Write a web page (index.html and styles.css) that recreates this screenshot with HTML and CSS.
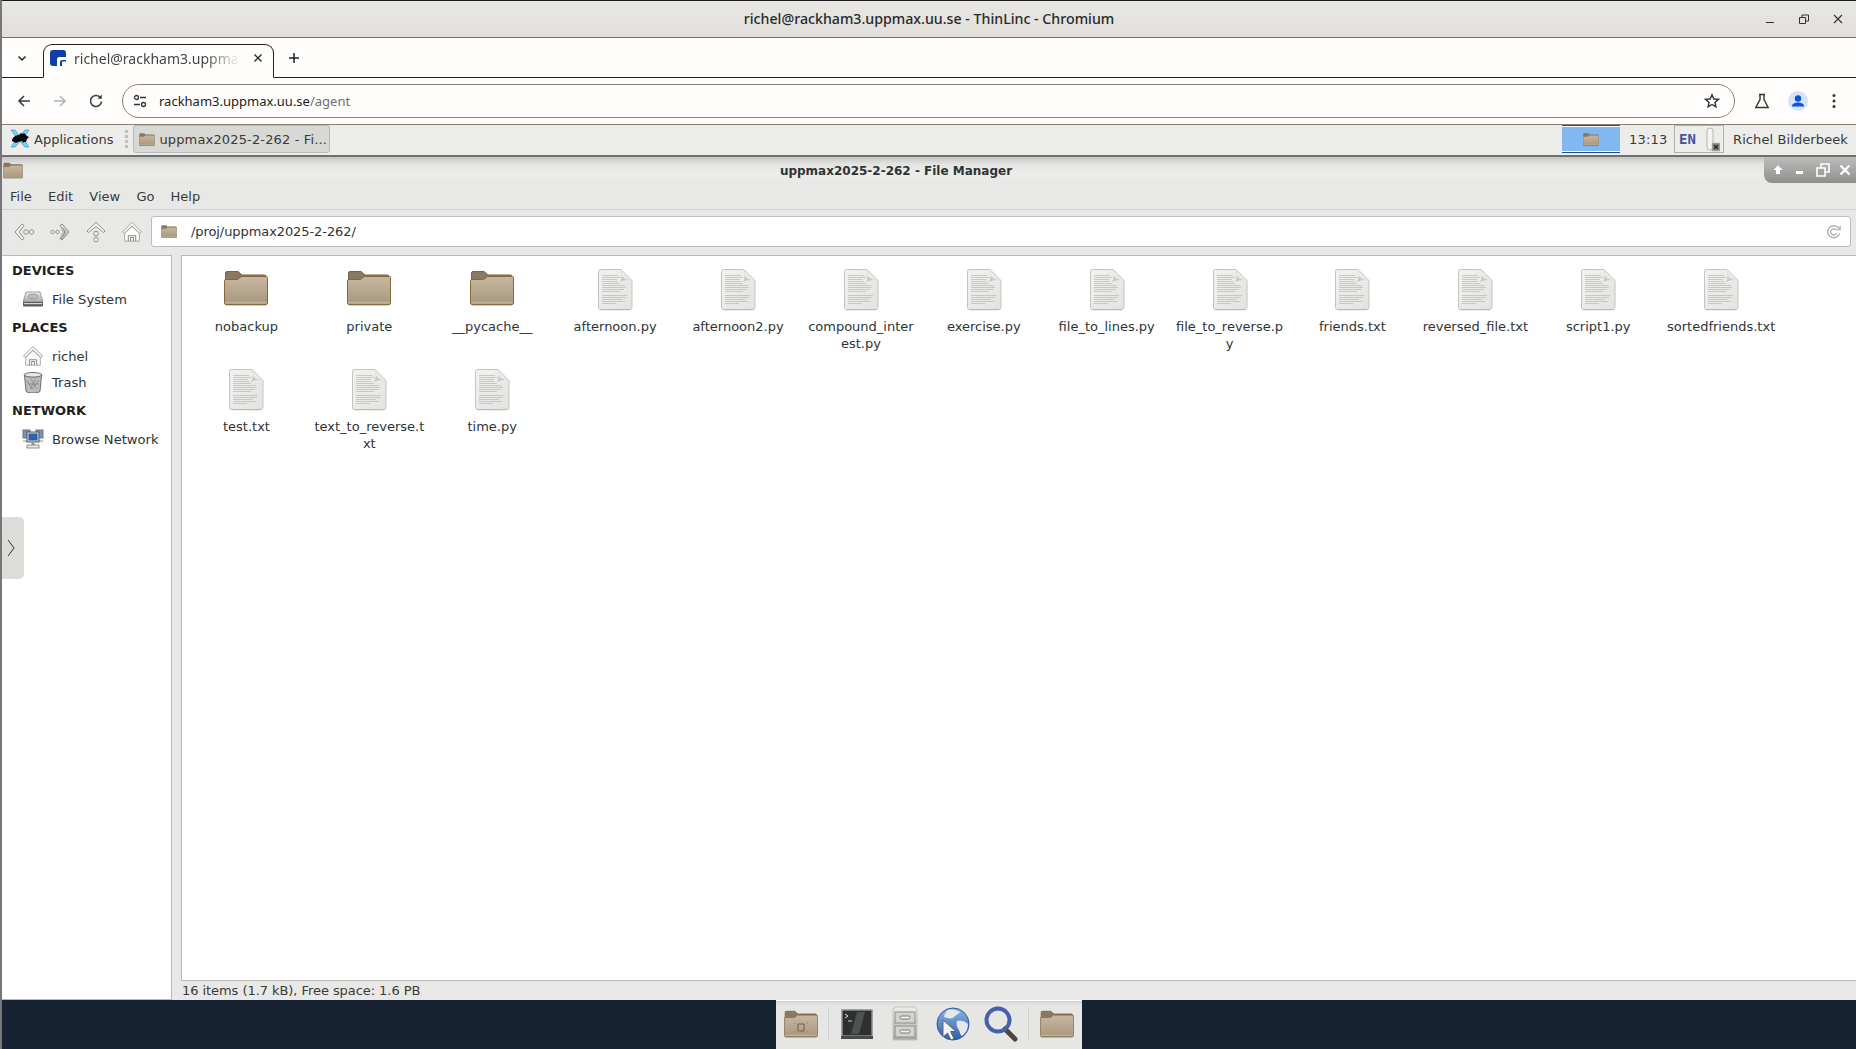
FILE: index.html
```html
<!DOCTYPE html>
<html lang="en">
<head>
<meta charset="utf-8">
<title>ThinLinc - Chromium</title>
<link rel="stylesheet" href="styles.css">
</head>
<body>
<svg class="defs" width="0" height="0" aria-hidden="true">
  <defs>
    <linearGradient id="gFolder" x1="0" y1="0" x2="0" y2="1"><stop offset="0" stop-color="#c6b79f"/><stop offset=".7" stop-color="#b2a188"/><stop offset=".88" stop-color="#a99a82"/><stop offset=".93" stop-color="#c2b49e"/><stop offset="1" stop-color="#a3927a"/></linearGradient>
    <linearGradient id="gDoc" x1="0" y1="0" x2="1" y2="1"><stop offset="0" stop-color="#f2f2f0"/><stop offset="1" stop-color="#e2e2df"/></linearGradient>
    <linearGradient id="gGlobe" x1="0" y1="0" x2="0" y2="1"><stop offset="0" stop-color="#8fb4e6"/><stop offset="1" stop-color="#2f5fa8"/></linearGradient>
    <linearGradient id="gSteel" x1="0" y1="0" x2="0" y2="1"><stop offset="0" stop-color="#eeeeea"/><stop offset="1" stop-color="#a9a9a4"/></linearGradient>
    <symbol id="folder" viewBox="0 0 44 36">
      <path d="M1.500 3a1.500 1.500 0 0 1 1.500-1.500h11l4 3.500h22.500a1.500 1.500 0 0 1 1.500 1.500V14H1.500z" fill="#8a7860" stroke="#76644c"/>
      <path d="M.5 10.500a1 1 0 0 1 1-1h12l4-3h25a1 1 0 0 1 1 1V33a1.500 1.500 0 0 1-1.500 1.500H2A1.500 1.500 0 0 1 .5 33z" fill="url(#gFolder)" stroke="#86683e"/>
      <rect x="2" y="35" width="40" height="1" fill="#000" opacity=".18"/>
    </symbol>
    <symbol id="doc" viewBox="0 0 36 42">
      <path d="M1.500 3A2 2 0 0 1 3.500 1H24l11 11v27a2 2 0 0 1-2 2H3.500a2 2 0 0 1-2-2z" fill="url(#gDoc)" stroke="#c4c4c0"/>
      <path d="M24 1c0 7 2 10 11 11-5-1-10 0-12 2 2-4 2-9 1-13z" fill="#c9c9c6"/>
      <path d="M5 7h16M5 9h18M5 11h15M5 13h16M5 15h18M5 17h23M5 19h24M5 21h22M5 23h18M5 27h25M5 29h24M5 31h20M5 33h23M5 35h14" stroke="#c3c3c0" stroke-width=".9" fill="none"/>
      <rect x="3" y="41" width="30" height="1" fill="#000" opacity=".12"/>
    </symbol>
    <symbol id="homeIcon" viewBox="0 0 24 24">
      <path d="M1.500 12 12 1.500 22.500 12l-2 1.500L12 5.500l-8.500 8z" fill="#f4f4f2" stroke="#9a9a96" stroke-width=".9"/>
      <path d="M4 13.500 12 6l8 7.500V22H4z" fill="#fbfbfa" stroke="#9a9a96" stroke-width=".9"/>
      <path d="M8 22v-6h8v6M10.500 22v-4h3v4" fill="none" stroke="#8c8c88" stroke-width="1.100"/>
    </symbol>
  </defs>
</svg>

<div class="desktop">
  <header class="chrome-title">
    <span class="chrome-title-text">richel@rackham3.uppmax.uu.se - ThinLinc - Chromium</span>
    <div class="chrome-winbtns">
      <svg width="12" height="12" viewBox="0 0 12 12"><path d="M2 9.500h8" stroke="#333" stroke-width="1"/></svg>
      <svg width="12" height="12" viewBox="0 0 12 12"><path d="M1.500 4.500h6v6h-6zM4 4.500V2h6.500v6H7.500" fill="none" stroke="#333" stroke-width="1"/></svg>
      <svg width="12" height="12" viewBox="0 0 12 12"><path d="M2 2l8 8M10 2l-8 8" stroke="#333" stroke-width="1.100"/></svg>
    </div>
  </header>

  <div class="tabstrip">
    <svg class="tab-list" width="12" height="12" viewBox="0 0 12 12"><path d="M2.500 4.500 6 8l3.500-3.500" fill="none" stroke="#222" stroke-width="1.500"/></svg>
    <div class="tab">
      <svg class="favicon" width="16" height="16" viewBox="0 0 16 16"><rect width="16" height="16" rx="3" fill="#0f3fa6"/><path d="M7 16V9.500A2.500 2.500 0 0 1 9.500 7H16v3h-4a2 2 0 0 0-2 2v4z" fill="#fff"/><rect x="12" y="11.500" width="4" height="4.500" fill="#fff"/></svg>
      <span class="tab-title">richel@rackham3.uppmax.uu.se</span>
      <svg class="tab-close" width="10" height="10" viewBox="0 0 10 10"><path d="M1.500 1.500l7 7M8.500 1.500l-7 7" stroke="#333" stroke-width="1.500"/></svg>
    </div>
    <svg class="new-tab" width="12" height="12" viewBox="0 0 12 12"><path d="M6 1v10M1 6h10" stroke="#222" stroke-width="1.500"/></svg>
  </div>

  <div class="omnibar">
    <svg class="nav-ic" width="16" height="16" viewBox="0 0 16 16"><path d="M14 8H3M8 3 3 8l5 5" fill="none" stroke="#3c3c3c" stroke-width="1.600"/></svg>
    <svg class="nav-ic" width="16" height="16" viewBox="0 0 16 16"><path d="M2 8h11M8 3l5 5-5 5" fill="none" stroke="#b4b4b4" stroke-width="1.600"/></svg>
    <svg class="nav-ic" width="16" height="16" viewBox="0 0 16 16"><path d="M13.500 8.500A5.500 5.500 0 1 1 11.800 4" fill="none" stroke="#3c3c3c" stroke-width="1.600"/><path d="M13.800 1.500v4.300H9.500z" fill="#3c3c3c"/></svg>
    <div class="urlbox">
      <svg class="site-ic" width="14" height="14" viewBox="0 0 14 14"><circle cx="3.500" cy="3.500" r="2" fill="none" stroke="#333" stroke-width="1.300"/><path d="M7 3.500h6M1 10.500h6" stroke="#333" stroke-width="1.300"/><circle cx="10.500" cy="10.500" r="2" fill="none" stroke="#333" stroke-width="1.300"/></svg>
      <span class="url">rackham3.uppmax.uu.se<span class="url-path">/agent</span></span>
      <svg class="star" width="16" height="16" viewBox="0 0 16 16"><path d="M8 1.800 9.800 6l4.600.4-3.500 3 1 4.500L8 11.500 4.100 13.900l1-4.500-3.500-3L6.200 6z" fill="none" stroke="#333" stroke-width="1.400"/></svg>
    </div>
    <svg class="flask" width="16" height="16" viewBox="0 0 16 16"><path d="M5 1.500h6M6 1.500v5L1.800 14.500h12.400L10 6.500v-5" fill="none" stroke="#333" stroke-width="1.400"/></svg>
    <svg class="avatar" width="20" height="20" viewBox="0 0 20 20"><circle cx="10" cy="10" r="10" fill="#d4e3fb"/><circle cx="10" cy="7.500" r="3.200" fill="#0b57d0"/><path d="M4 15.500c0-3 3-4 6-4s6 1 6 4z" fill="#0b57d0"/></svg>
    <svg class="dots" width="4" height="16" viewBox="0 0 4 16"><circle cx="2" cy="2.500" r="1.500" fill="#333"/><circle cx="2" cy="8" r="1.500" fill="#333"/><circle cx="2" cy="13.500" r="1.500" fill="#333"/></svg>
  </div>

  <div class="panel">
    <div class="apps">
      <svg width="22" height="20" viewBox="0 0 22 20"><path d="M2 1h4l5 6 5-6h4l-6 8.500L20 18h-4l-5-5.500L6 18H2l6-8.500z" fill="#7fd0f2" stroke="#2b86c4" stroke-width=".6"/><path d="M3 12c0-3 3-6 7-6l2-2 2 1 1-1 3 3 2 1-2 2-1 3h-2l-1 1-1-2-4 1-2 1z" fill="#0a0a0a"/></svg>
      <span>Applications</span>
    </div>
    <div class="grip"><i></i><i></i><i></i><i></i></div>
    <div class="task">
      <svg width="16" height="15"><use href="#folder"/></svg>
      <span>uppmax2025-2-262 - Fi...</span>
    </div>
    <div class="panel-spacer"></div>
    <div class="pager"><svg width="16" height="15"><use href="#folder"/></svg></div>
    <span class="clock">13:13</span>
    <div class="tray">
      <span class="lang">EN</span>
      <svg width="16" height="25" viewBox="0 0 16 25"><rect x="3" y="1" width="6" height="22" rx="3" fill="#f4f4f2" stroke="#b4b4b0"/><rect x="8" y="16" width="8" height="8" fill="#8a8a88" stroke="#b9b9b6" stroke-width=".6"/><path d="M10 18l4 4M14 18l-4 4" stroke="#222" stroke-width="1.300"/></svg>
    </div>
    <span class="user">Richel Bilderbeek</span>
  </div>

  <div class="wm-title">
    <svg class="wm-icon" width="20" height="17"><use href="#folder"/></svg>
    <span class="wm-title-text">uppmax2025-2-262 - File Manager</span>
    <div class="wm-btns">
      <svg width="14" height="14" viewBox="0 0 14 14"><path d="M7 2 2.500 7H5v4h4V7h2.500z" fill="#fff"/></svg>
      <svg width="14" height="14" viewBox="0 0 14 14"><rect x="3" y="8" width="7" height="3" fill="#fff"/></svg>
      <svg width="14" height="14" viewBox="0 0 14 14"><path d="M1 5h8v8H1zM5 5V1h8v8H9" fill="none" stroke="#fff" stroke-width="1.600"/></svg>
      <svg width="14" height="14" viewBox="0 0 14 14"><path d="M2.500 2.500l9 9M11.500 2.500l-9 9" stroke="#fff" stroke-width="2.400"/></svg>
    </div>
  </div>

  <nav class="menubar">
    <span>File</span><span>Edit</span><span>View</span><span>Go</span><span>Help</span>
  </nav>

  <div class="fm-toolbar">
    <svg class="tool" width="22" height="22" viewBox="0 0 22 22"><path d="M9 3 2 11l7 8 2-1.500L6 11l5-6.500z" fill="#f6f6f4" stroke="#8e8e8a"/><circle cx="13" cy="11" r="2.200" fill="#f2f2f0" stroke="#8e8e8a"/><circle cx="18.500" cy="11" r="2.200" fill="#f2f2f0" stroke="#8e8e8a"/></svg>
    <svg class="tool" width="22" height="22" viewBox="0 0 22 22"><path d="M13 3l7 8-7 8-2-1.500L16 11 11 4.500z" fill="url(#gSteel)" stroke="#8e8e8a"/><path d="M14 7l3 4-3 4M12 8l2.500 3-2.500 3" fill="none" stroke="#8e8e8a" stroke-width=".7"/><circle cx="8.500" cy="11" r="1.700" fill="#f2f2f0" stroke="#8e8e8a"/><circle cx="3.500" cy="11" r="1.700" fill="#f2f2f0" stroke="#8e8e8a"/></svg>
    <svg class="tool" width="22" height="22" viewBox="0 0 22 22"><path d="M11 1.500 2 10l1.500 1.500L11 5.500l7.500 6L20 10z" fill="#f6f6f4" stroke="#8e8e8a"/><circle cx="11" cy="12.500" r="2.300" fill="#f2f2f0" stroke="#8e8e8a"/><circle cx="11" cy="18.500" r="2.300" fill="#f2f2f0" stroke="#8e8e8a"/></svg>
    <svg class="tool" width="22" height="22"><use href="#homeIcon"/></svg>
    <div class="location">
      <svg width="16" height="15"><use href="#folder"/></svg>
      <span class="path">/proj/uppmax2025-2-262/</span>
      <svg class="reload" width="16" height="16" viewBox="0 0 16 16"><path d="M13.500 9.500A6 6 0 1 1 12.500 4M10.500 9a3 3 0 1 1-.5-3" fill="none" stroke="#b5b5b2" stroke-width="1.500"/><path d="M15 1v5.500H9.500z" fill="#c4c4c1"/></svg>
    </div>
  </div>

  <div class="fm-body">
    <aside class="sidebar">
      <h3>DEVICES</h3>
      <div class="side-item">
        <svg width="22" height="22" viewBox="0 0 22 22"><path d="M4 4h14l3 10H1z" fill="url(#gSteel)" stroke="#8c8c88" stroke-width=".8"/><rect x="1" y="14" width="20" height="4.500" rx="1" fill="#5c5c5a"/><rect x="2" y="15" width="18" height="1.200" fill="#d8d8d4"/><ellipse cx="11" cy="8.500" rx="5" ry="2.300" fill="#bdbdb9" stroke="#999"/></svg>
        <span>File System</span>
      </div>
      <h3>PLACES</h3>
      <div class="side-item">
        <svg width="22" height="22"><use href="#homeIcon"/></svg>
        <span>richel</span>
      </div>
      <div class="side-item">
        <svg width="22" height="22" viewBox="0 0 22 22"><ellipse cx="11" cy="4" rx="9" ry="2.500" fill="#e8e8e4" stroke="#6e6e6a"/><path d="M2.500 4.500 4 20a7 2 0 0 0 14 0l1.500-15.500a9 2.500 0 0 1-17 0z" fill="#bcbcb8" stroke="#6e6e6a"/><path d="M5 9l5 9M9 8l6 10M14 8l-6 10M17 9l-7 9M5 13h12" stroke="#858581" stroke-width=".8"/></svg>
        <span>Trash</span>
      </div>
      <h3>NETWORK</h3>
      <div class="side-item">
        <svg width="22" height="22" viewBox="0 0 22 22"><rect x="1" y="2" width="7" height="8" fill="#6f93c6" stroke="#777"/><rect x="14" y="2" width="7" height="8" fill="#6f93c6" stroke="#777"/><path d="M1 13h20" stroke="#888"/><rect x="5" y="4" width="12" height="10" fill="#d8d8d4" stroke="#555"/><rect x="6.500" y="5.500" width="9" height="7" fill="#2a62ae"/><rect x="9.500" y="14" width="3" height="3" fill="#999"/><rect x="5" y="17" width="12" height="3" fill="#ececea" stroke="#777" stroke-width=".8"/></svg>
        <span>Browse Network</span>
      </div>
    </aside>
    <button class="handle" type="button" aria-label="Show panel"><svg width="8" height="18" viewBox="0 0 8 18"><path d="M1 1l6 8-6 8" fill="none" stroke="#333" stroke-width="1"/></svg></button>
    <div class="splitter"></div>
    <div class="content">
      <main class="files">
        <div class="grid">
          <div class="file"><svg class="ic-folder"><use href="#folder"/></svg><span>nobackup</span></div>
          <div class="file"><svg class="ic-folder"><use href="#folder"/></svg><span>private</span></div>
          <div class="file"><svg class="ic-folder"><use href="#folder"/></svg><span>__pycache__</span></div>
          <div class="file"><svg class="ic-doc"><use href="#doc"/></svg><span>afternoon.py</span></div>
          <div class="file"><svg class="ic-doc"><use href="#doc"/></svg><span>afternoon2.py</span></div>
          <div class="file"><svg class="ic-doc"><use href="#doc"/></svg><span>compound_inter<br>est.py</span></div>
          <div class="file"><svg class="ic-doc"><use href="#doc"/></svg><span>exercise.py</span></div>
          <div class="file"><svg class="ic-doc"><use href="#doc"/></svg><span>file_to_lines.py</span></div>
          <div class="file"><svg class="ic-doc"><use href="#doc"/></svg><span>file_to_reverse.p<br>y</span></div>
          <div class="file"><svg class="ic-doc"><use href="#doc"/></svg><span>friends.txt</span></div>
          <div class="file"><svg class="ic-doc"><use href="#doc"/></svg><span>reversed_file.txt</span></div>
          <div class="file"><svg class="ic-doc"><use href="#doc"/></svg><span>script1.py</span></div>
          <div class="file"><svg class="ic-doc"><use href="#doc"/></svg><span>sortedfriends.txt</span></div>
          <div class="file"><svg class="ic-doc"><use href="#doc"/></svg><span>test.txt</span></div>
          <div class="file"><svg class="ic-doc"><use href="#doc"/></svg><span>text_to_reverse.t<br>xt</span></div>
          <div class="file"><svg class="ic-doc"><use href="#doc"/></svg><span>time.py</span></div>
        </div>
      </main>
      <footer class="status">16 items (1.7 kB), Free space: 1.6 PB</footer>
    </div>
  </div>

  <div class="dock-row">
    <div class="dock">
      <svg class="dock-ic d-folder" viewBox="0 0 44 36"><use href="#folder" width="44" height="36"/><rect x="18" y="18" width="8" height="9" rx="1" fill="none" stroke="#6f6350" stroke-width="1.400"/><path d="M13 17h2M29 17h2M13 28h2M29 28h2" stroke="#8f816b"/></svg>
      <i class="dock-sep"></i>
      <svg class="dock-ic d-term" viewBox="0 0 32 30"><rect x="1" y="1" width="30" height="26" fill="#2c302e" stroke="#8d8d8a" stroke-width="1.500"/><path d="M16 3h8l-6 22h-8z" fill="#4c5250"/><path d="M4 5l3 2-3 2" fill="none" stroke="#ddd"/><path d="M7 12h4" stroke="#ccc"/><rect x="0" y="27" width="32" height="3" fill="#4a4a48"/></svg>
      <svg class="dock-ic d-cab" viewBox="0 0 26 36"><path d="M3 1h20l2 3v30H1V4z" fill="url(#gSteel)" stroke="#c0c0bc"/><rect x="3" y="6" width="20" height="11" fill="#d2d2ce" stroke="#8e8e8a"/><rect x="3" y="20" width="20" height="11" fill="#d2d2ce" stroke="#8e8e8a"/><rect x="8" y="10" width="10" height="3" rx="1.500" fill="#f2f2f0" stroke="#777"/><rect x="8" y="24" width="10" height="3" rx="1.500" fill="#f2f2f0" stroke="#777"/></svg>
      <svg class="dock-ic d-globe" viewBox="0 0 34 34"><circle cx="17" cy="17" r="16" fill="url(#gGlobe)" stroke="#2c5a9e"/><path d="M12 3c5-1 9 0 12 2-2 3-5 3-7 6-3 1-6 0-9-1 0-3 2-5 4-7zM21 14c4-1 8 0 11 3 0 5-2 9-6 12-2-1-2-4-3-6-2-2-3-6-2-9z" fill="#e4e8e6"/><path d="M7 13v17l4.500-4 3.500 7 3-1.500-3.500-7H20z" fill="#f6f6f6" stroke="#666"/></svg>
      <svg class="dock-ic d-mag" viewBox="0 0 34 36"><path d="M21 23l10 10" stroke="#4b4740" stroke-width="5" stroke-linecap="round"/><circle cx="14" cy="14" r="11.500" fill="none" stroke="#4560aa" stroke-width="4"/></svg>
      <i class="dock-sep"></i>
      <svg class="dock-ic d-folder" viewBox="0 0 44 36"><use href="#folder" width="44" height="36"/></svg>
    </div>
  </div>
</div>
</body>
</html>
```

FILE: styles.css
```css
* { box-sizing: border-box; }
html, body { margin: 0; padding: 0; height: 100%; overflow: hidden; }
body { font-family: "DejaVu Sans", sans-serif; font-size: 13px; color: #2e3436; background: #fff; }
.defs { position: absolute; }
svg { display: block; flex: none; }

.desktop { display: flex; flex-direction: column; width: 1856px; height: 1049px; border-left: 2px solid #77767a; }

/* Chromium title */
.chrome-title { height: 38px; flex: none; display: flex; align-items: center; justify-content: center; padding-bottom: 2px; background: linear-gradient(#e8e7e4, #e2dfdb); border-top: 1px solid #1c1c1c; border-bottom: 1px solid #7d7264; position: relative; }
.chrome-title-text { font-family: "Noto Sans", sans-serif; font-size: 14.200px; font-weight: 500; color: #2a2a2a; }
.chrome-winbtns { position: absolute; right: 12px; top: 12px; display: flex; gap: 22px; }

.tabstrip { height: 40px; flex: none; display: flex; align-items: flex-end; background: #fffefc; border-bottom: 1px solid #222; }
.tab-list { margin: 0 0 13px 14px; }
.tab { width: 231px; height: 34px; margin: 0 0 -1px 15px; display: flex; align-items: center; padding: 0 0 6px 6px; background: #fffefc; border: 1px solid #222; border-bottom: 1px solid #fffefc; border-radius: 9px 9px 0 0; }
.tab-title { font-family: "Noto Sans", sans-serif; font-size: 14px; color: #444; margin-left: 8px; width: 167px; overflow: hidden; white-space: nowrap; -webkit-mask-image: linear-gradient(90deg, #000 130px, transparent 167px); mask-image: linear-gradient(90deg, #000 130px, transparent 167px); }
.tab-close { margin-left: 12px; }
.new-tab { margin: 0 0 13px 14px; }

.omnibar { height: 47px; flex: none; display: flex; align-items: center; background: #fffefc; border-bottom: 1px solid #8a8074; padding-left: 14px; border-radius: 8px 8px 0 0; }
.nav-ic { margin-right: 20px; }
.urlbox { width: 1613px; height: 34px; margin-left: -2px; display: flex; align-items: center; padding: 0 14px 0 10px; border: 1px solid #8d8376; border-radius: 17px; background: #fffefc; }
.url { font-family: "Noto Sans", sans-serif; font-size: 13px; color: #1c1c1c; margin-left: 12px; flex: 1; }
.url-path { color: #6d6d6d; }
.flask { margin-left: 19px; }
.avatar { margin-left: 18px; }
.dots { margin-left: 24px; }

/* Panel */
.panel { height: 32px; flex: none; display: flex; align-items: center; background: #ececea; border-bottom: 2px solid #6f6f6d; padding: 0 0 2px 7px; }
.apps { display: flex; align-items: center; gap: 3px; color: #3a3a3a; }
.grip { display: flex; flex-direction: column; gap: 2px; margin: 0 5px 0 12px; }
.grip i { width: 3px; height: 3px; background: #bdbdb9; }
.task { width: 197px; height: 28px; display: flex; align-items: center; gap: 4px; padding-left: 5px; background: #d8d8d5; border: 1px solid #b8b8b5; border-radius: 3px; color: #3a3a3a; letter-spacing: .15px; }
.panel-spacer { flex: 1; }
.pager { width: 58px; height: 28px; display: flex; align-items: center; justify-content: center; background: #83b7f0; border-top: 1px solid #1c4e8a; border-bottom: 1px solid #1c4e8a; box-shadow: inset 0 1px #fff, inset 0 -1px #fff; }
.clock { margin-left: 9px; width: 45px; color: #3a3a3a; letter-spacing: .2px; }
.tray { width: 50px; height: 28px; display: flex; align-items: center; gap: 8px; padding-left: 4px; border: 1px solid #b0b0ad; }
.lang { font-family: "DejaVu Sans Mono", monospace; font-size: 14px; font-weight: 700; color: #4550a0; }
.user { margin: 0 8px 0 9px; color: #3a3a3a; letter-spacing: .1px; }

/* WM title */
.wm-title { height: 26px; flex: none; display: flex; align-items: center; position: relative; background: linear-gradient(#c4c4c2, #e4e4e2 28%, #ececea 60%, #e8e8e6); }
.wm-icon { margin-left: 1px; }
.wm-title-text { position: absolute; left: 0; right: 66px; margin-top: 2px; text-align: center; font-weight: 700; font-size: 12px; color: #2e3436; }
.wm-btns { position: absolute; right: 0; top: 0; width: 92px; height: 26px; display: flex; align-items: center; justify-content: space-around; padding: 0 0 0 3px; background: linear-gradient(#bcbcba, #8f8f8d); border-radius: 0 0 0 8px; }

.menubar { height: 27px; flex: none; display: flex; align-items: center; gap: 16.200px; padding: 1px 0 0 8px; background: #e8e8e6; border-bottom: 1px solid #d2d2d0; color: #3a3a3a; }

.fm-toolbar { height: 45px; flex: none; display: flex; align-items: center; gap: 14px; padding: 0 0 2px 11px; background: #e8e8e6; }
.location { width: 1700px; height: 31px; margin-left: -6px; display: flex; align-items: center; padding: 0 8px 0 9px; border: 1px solid #bdbdba; border-radius: 3px; background: #fff; }
.path { margin-left: 14px; flex: 1; color: #2e3436; letter-spacing: -.08px; }

.fm-body { flex: 1; min-height: 0; display: flex; position: relative; background: #e8e8e6; }
.sidebar { width: 170px; flex: none; background: #fff; border: 1px solid #b9b9b6; border-left: none; padding: 5px 0 0 10px; }
.sidebar h3 { margin: 0; height: 20px; line-height: 20px; font-size: 13px; font-weight: 700; color: #1f1f1f; }
.sidebar .side-item + h3 { margin-top: 6px; }
.sidebar h3 + .side-item { margin-top: 5px; }
.side-item { height: 26px; display: flex; align-items: center; gap: 8px; padding-left: 10px; font-size: 13.100px; color: #2e3436; }
.handle { position: absolute; left: 0; top: 262px; width: 22px; height: 62px; padding: 0 0 0 5px; border: none; border-radius: 0 5px 5px 0; background: #dcdcd9; }
.splitter { width: 9px; flex: none; }
.content { flex: 1; min-width: 0; display: flex; flex-direction: column; }
.files { flex: 1; min-height: 0; background: #fff; border: 1px solid #b9b9b6; border-right: none; padding: 12px 0 0 3px; }
.grid { display: grid; grid-template-columns: repeat(13, 122.900px); grid-auto-rows: 100px; }
.file { display: flex; flex-direction: column; align-items: center; text-align: center; line-height: 17px; color: #2e3436; white-space: nowrap; }
.file span { display: block; }
.ic-folder { width: 44px; height: 36px; margin: 2px 0 12px; }
.ic-doc { width: 36px; height: 43px; margin: 0 0 7px; }
.status { height: 19px; flex: none; padding-left: 1px; line-height: 20px; letter-spacing: -.06px; color: #3a3a3a; background: #e8e8e6; }

/* Dock */
.dock-row { height: 49px; flex: none; display: flex; justify-content: center; background: #162232; }
.dock { width: 306px; display: flex; align-items: center; padding: 0 0 2px 8px; background: #e6e6e4; border-top: 1px solid #fff; box-shadow: inset 0 4px 5px -4px #bbb; }
.dock-ic { display: block; }
.d-folder { width: 34px; height: 30px; }
.d-term { width: 32px; height: 30px; margin-left: 12px; }
.d-cab { width: 26px; height: 36px; margin-left: 19px; }
.d-globe { width: 34px; height: 34px; margin-left: 18px; }
.d-mag { width: 34px; height: 36px; margin-left: 14px; }
.dock-sep { width: 1px; height: 34px; margin-left: 10px; background: #cfcfcc; }
.dock-sep + .d-folder { margin-left: 11px; }
```
